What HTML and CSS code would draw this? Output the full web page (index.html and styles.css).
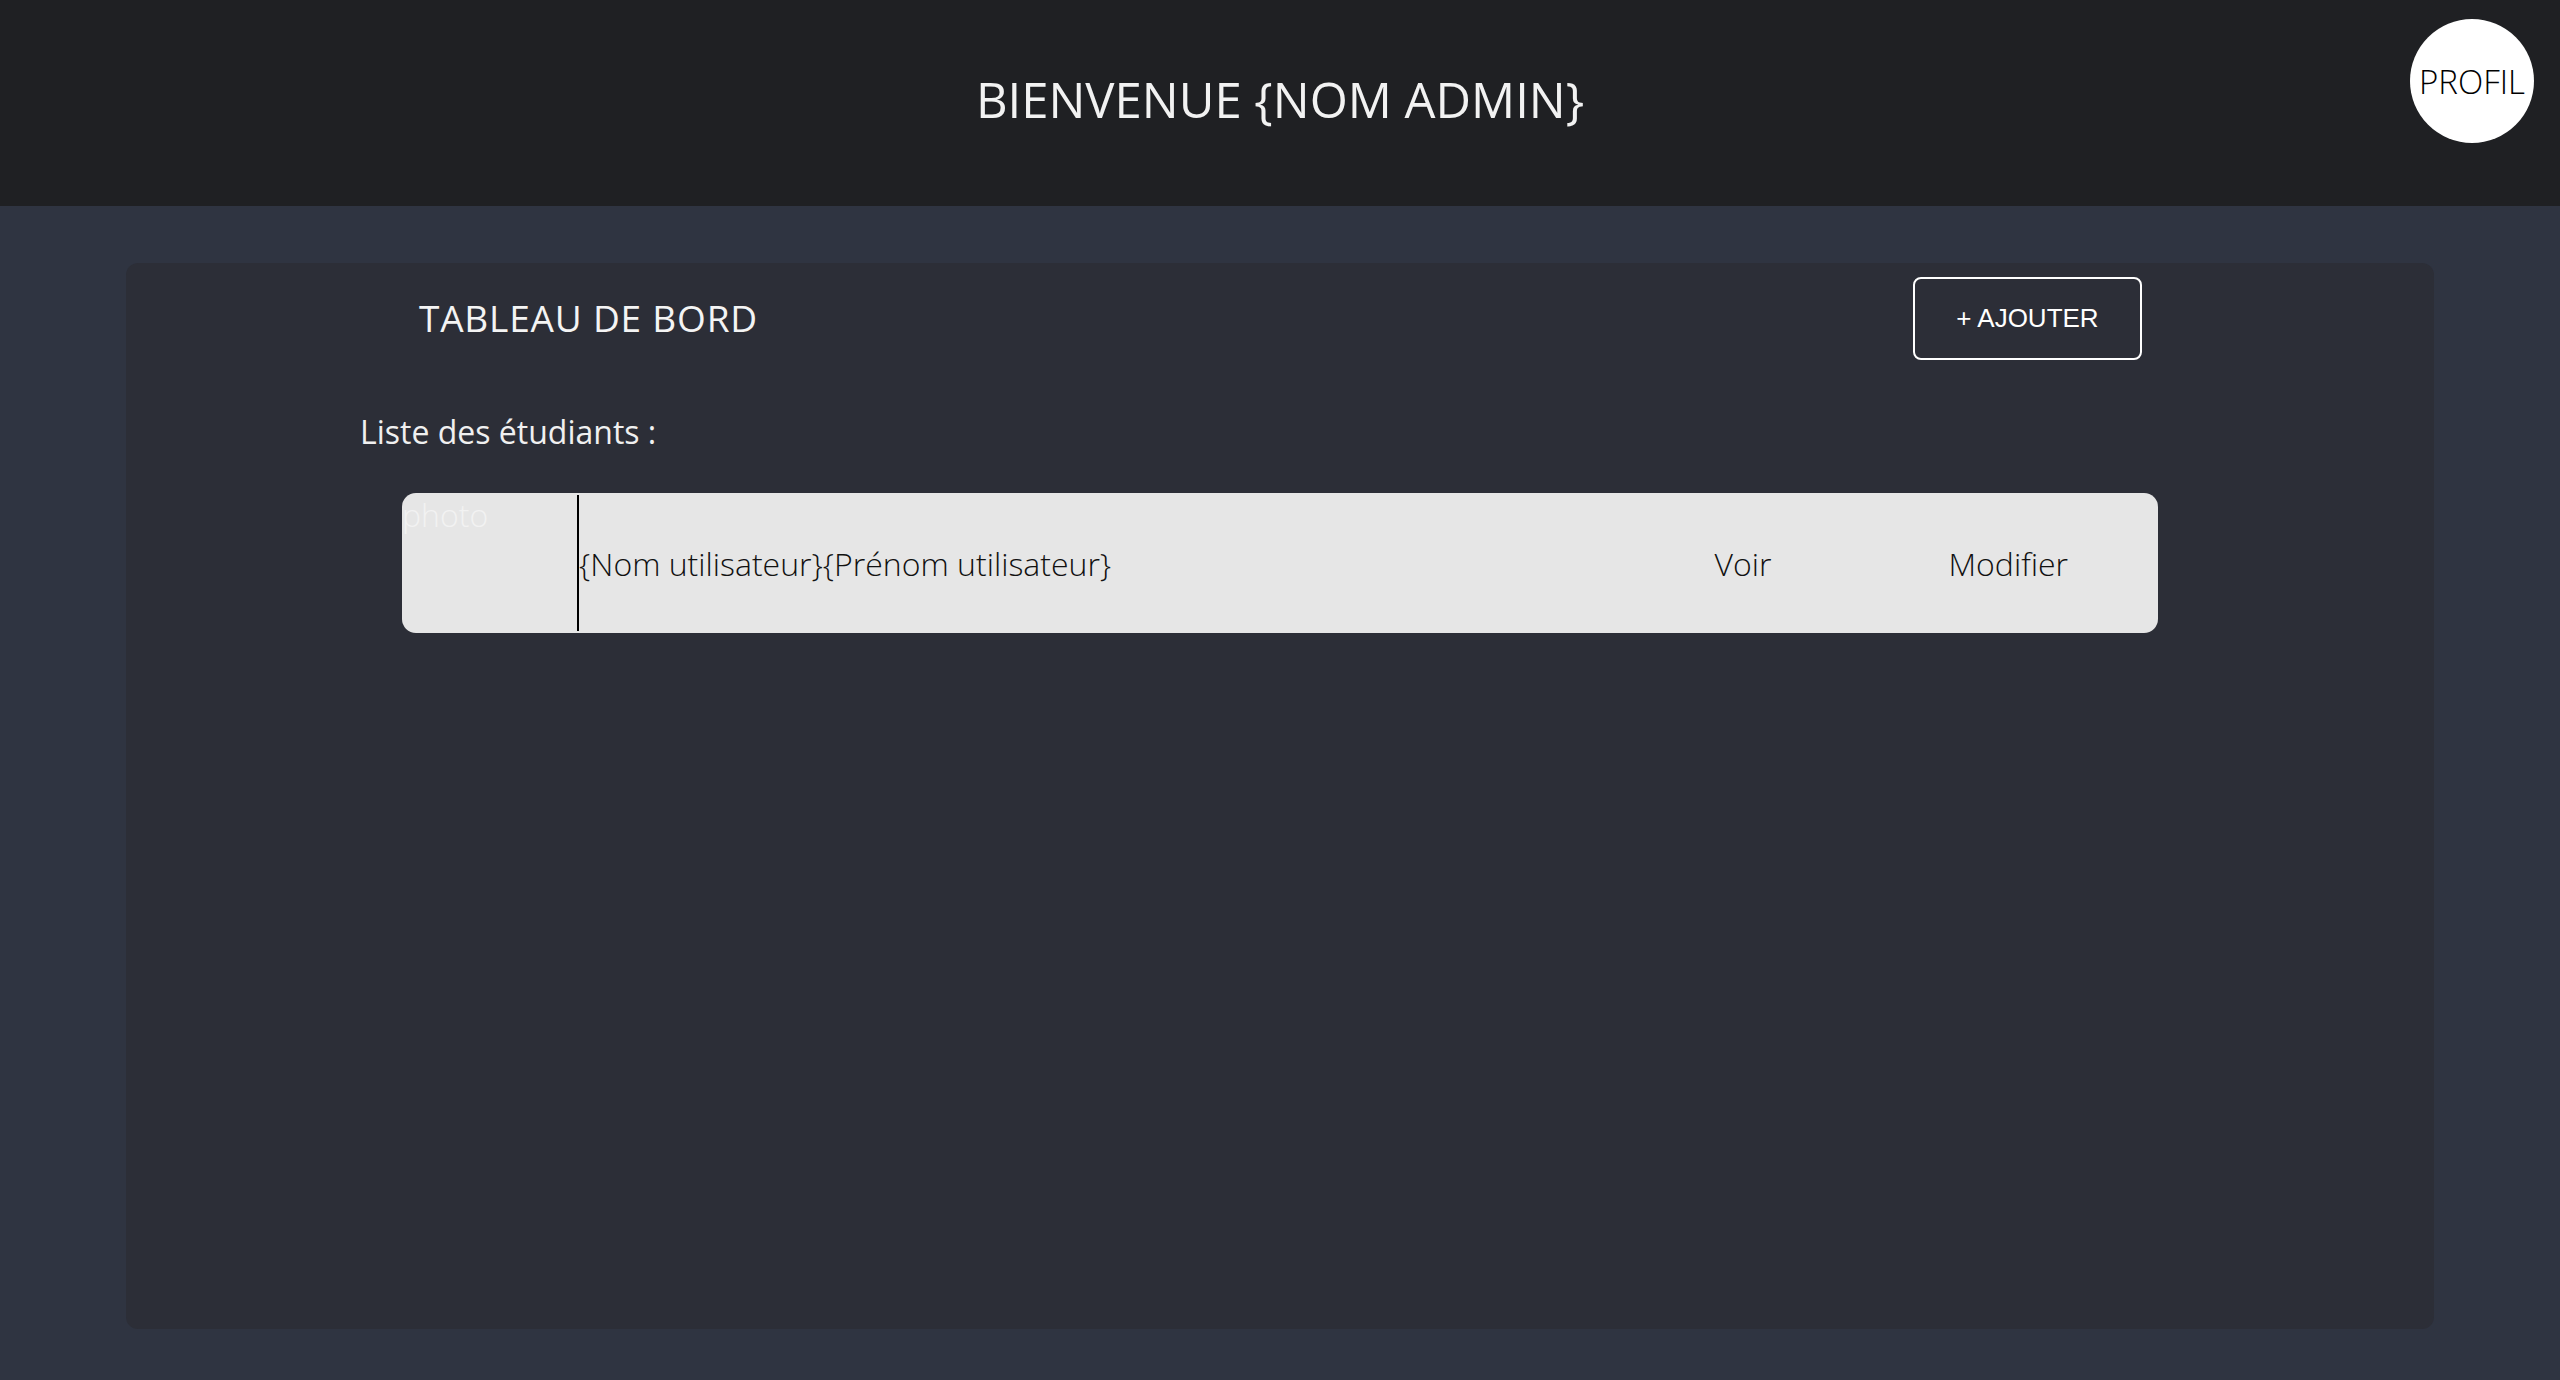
FILE: index.html
```html
<!DOCTYPE html>
<html lang="fr">
<head>
<meta charset="utf-8">
<title>Tableau de bord</title>
<link rel="stylesheet" href="styles.css">
</head>
<body>
<header class="topbar">
  <h1 class="welcome">BIENVENUE {NOM ADMIN}</h1>
  <a class="profile" href="#">PROFIL</a>
</header>
<main class="board">
  <div class="board-head">
    <h2 class="board-title">TABLEAU DE BORD</h2>
    <button class="add-btn">+ AJOUTER</button>
  </div>
  <p class="list-label">Liste des étudiants :</p>
  <div class="student">
    <div class="student-photo">photo</div>
    <div class="student-name">{Nom utilisateur}{Prénom utilisateur}</div>
    <a class="student-action voir" href="#">Voir</a>
    <a class="student-action modifier" href="#">Modifier</a>
  </div>
</main>
</body>
</html>
```
FILE: styles.css
```css
* { box-sizing: border-box; }
html, body { margin: 0; padding: 0; }
body {
  background: #2f3441;
  font-family: "Open Sans", "Noto Sans", sans-serif;
  width: 2560px;
  height: 1380px;
  overflow: hidden;
}
.topbar {
  position: relative;
  height: 206px;
  background: #1f2023;
  display: flex;
  align-items: center;
  justify-content: center;
}
.welcome {
  margin: 0 0 8px 0;
  font-size: 49px;
  font-weight: 500;
  color: #f2f2f2;
  line-height: 1;
}
.profile {
  position: absolute;
  top: 19px;
  right: 26px;
  width: 124px;
  height: 124px;
  border-radius: 50%;
  background: #ffffff;
  color: #000;
  text-decoration: none;
  font-size: 33px;
  font-weight: 300;
  display: flex;
  align-items: center;
  justify-content: center;
}
.board {
  width: 2308px;
  height: 1066px;
  margin: 57px auto 0;
  background: #2c2e37;
  border-radius: 12px;
  padding-top: 14px;
}
.board-head {
  display: flex;
  justify-content: space-between;
  align-items: center;
  padding: 0 292px 0 293px;
}
.board-title {
  margin: 0 0 2px 0;
  font-size: 37px;
  font-weight: 500;
  letter-spacing: 0.8px;
  color: #f4f4f4;
  line-height: 1;
}
.add-btn {
  width: 229px;
  height: 83px;
  border: 2px solid #ffffff;
  border-radius: 8px;
  background: transparent;
  color: #ffffff;
  font-family: "Liberation Sans", Arial, sans-serif;
  font-size: 26px;
}
.list-label {
  margin: 56px 0 0 234px;
  font-size: 32px;
  font-weight: 500;
  color: #f0f0f0;
  line-height: 1;
}
.student {
  margin: 45px 276px 0;
  height: 140px;
  background: #e6e6e6;
  border-radius: 14px;
  display: flex;
  align-items: stretch;
}
.student-photo {
  width: 177px;
  border-right: 2px solid #000;
  margin: 2px 0;
  color: #f2f2f2;
  font-size: 32px;
  font-weight: 300;
  line-height: 1;
  padding-top: 4px;
}
.student-name {
  flex: 1;
  display: flex;
  align-items: center;
  font-size: 32px;
  font-weight: 300;
  color: #111;
}
.student-action {
  display: flex;
  align-items: center;
  font-size: 32px;
  font-weight: 300;
  color: #111;
  text-decoration: none;
}
.voir { margin-right: 177px; }
.modifier { margin-right: 90px; }
```
